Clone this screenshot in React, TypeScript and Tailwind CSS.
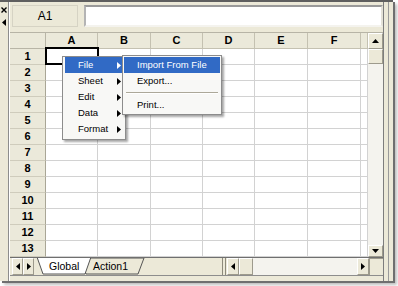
import React from "react";

const COLS = [
  { l: "A", w: 52 },
  { l: "B", w: 53 },
  { l: "C", w: 52 },
  { l: "D", w: 52 },
  { l: "E", w: 53 },
  { l: "F", w: 53 },
  { l: "", w: 7 },
];
const ROWS = Array.from({ length: 13 }, (_, i) => i + 1);

type Dir = "up" | "down" | "left" | "right";

function Tri({ dir }: { dir: Dir }) {
  const vert = dir === "up" || dir === "down";
  const pts = {
    up: "0,4 3.5,0 7,4",
    down: "0,0 7,0 3.5,4",
    left: "4,0 4,7 0,3.5",
    right: "0,0 0,7 4,3.5",
  }[dir];
  return (
    <svg width={vert ? 7 : 4} height={vert ? 4 : 7} viewBox={vert ? "0 0 7 4" : "0 0 4 7"}>
      <polygon points={pts} fill="#000" />
    </svg>
  );
}

function Btn({ dir, className }: { dir: Dir; className: string }) {
  return (
    <div
      className={`flex items-center justify-center bg-[#ece9d8] border border-t-white border-l-white border-r-[#9d9a8c] border-b-[#9d9a8c] ${className}`}
    >
      <Tri dir={dir} />
    </div>
  );
}

function FileMenu() {
  const items = ["File", "Sheet", "Edit", "Data", "Format"];
  return (
    <div className="absolute left-[62px] top-[54px] w-[64px] h-[84px] bg-[#f8f8f6] border border-[#8c8c8c] shadow-[2px_2px_2px_rgba(0,0,0,0.35)] pl-[2px] pr-[3px] flex flex-col">
      {items.map((t, i) => (
        <div
          key={t}
          className={`h-[16px] flex items-center justify-between pl-[13px] pr-[1px] ${
            i === 0 ? "bg-[#316ac5] text-white" : "text-black"
          }`}
        >
          <span>{t}</span>
          {i === 0 ? (
            <svg width={4} height={7} viewBox="0 0 4 7">
              <polygon points="0,0 0,7 4,3.5" fill="#fff" />
            </svg>
          ) : (
            <Tri dir="right" />
          )}
        </div>
      ))}
    </div>
  );
}

function SubMenu() {
  return (
    <div className="absolute left-[122px] top-[53px] w-[100px] h-[60px] bg-[#f8f8f6] border border-[#8c8c8c] shadow-[2px_2px_2px_rgba(0,0,0,0.35)] p-[1px] flex flex-col">
      <div className="h-[16px] flex items-center pl-[13px] bg-[#316ac5] text-white">Import From File</div>
      <div className="h-[16px] flex items-center pl-[13px]">Export...</div>
      <div className="h-[8px] flex flex-col justify-center px-[2px]">
        <div className="h-[1px] bg-[#aca899]" />
        <div className="h-[1px] bg-white" />
      </div>
      <div className="h-[16px] flex items-center pl-[13px]">Print...</div>
    </div>
  );
}

function SheetTabs() {
  return (
    <div className="relative w-[112px] h-full">
      <svg className="absolute inset-0" width={112} height={17} viewBox="0 0 112 17">
        <polygon points="46,0 110,0 104,16 52,16" fill="#ece9d8" stroke="#555" strokeWidth={1} />
        <polygon points="3,-1 57,-1 51,16 9,16" fill="#fff" stroke="#555" strokeWidth={1} />
      </svg>
      <span className="absolute left-[15px] top-[2px] text-[10.5px] leading-[13px]">Global</span>
      <span className="absolute left-[59px] top-[2px] text-[10.5px] leading-[13px]">Action1</span>
    </div>
  );
}

export default function App() {
  return (
    <div className="w-[398px] h-[286px] bg-white overflow-hidden" style={{ fontFamily: '"Liberation Sans", Arial, sans-serif' }}>
      <div className="relative w-[393px] h-[281px] bg-[#ece9d8] border-t-2 border-[#5f5f5f] shadow-[2px_2px_0_#6f6f6f,4px_4px_3px_#bdbdbd] flex">
        {/* docking strip */}
        <div className="w-[9px] border-r border-[#8d8d8d] flex flex-col items-center pt-[5px] gap-[6px]">
          <svg width={6} height={6} viewBox="0 0 6 6">
            <path d="M0.5 0.5 L5.5 5.5 M5.5 0.5 L0.5 5.5" stroke="#000" strokeWidth={1.4} />
          </svg>
          <Tri dir="left" />
        </div>
        <div className="w-[1px] bg-white" />

        {/* main */}
        <div className="w-[373px] flex flex-col">
          <div className="h-[30px] flex items-start pt-[3px] pl-[2px] gap-[6px]">
            <div className="w-[66px] h-[22px] flex items-center justify-center text-[12px] border border-[#d6d3c4]">A1</div>
            <div className="flex-1 h-[22px] bg-white border-2 border-t-[#9a9a9a] border-l-[#b4b4b4] border-r-[#e4e2d8] border-b-[#f4f3ee]" />
          </div>

          <div className="h-[225px] flex border-t border-[#b7b4a6]">
            <div className="w-[358px] flex flex-col bg-white overflow-hidden">
              <div className="h-[16px] flex shrink-0">
                <div className="w-[36px] shrink-0 bg-[#ebe9da] border-r border-b border-[#b8b5a6]" />
                {COLS.map((c, i) => (
                  <div
                    key={i}
                    style={{ width: c.w }}
                    className="shrink-0 bg-[#ebe9da] border-r border-b border-[#c4c1b1] flex items-center justify-center text-[11px] font-bold"
                  >
                    {c.l}
                  </div>
                ))}
              </div>
              {ROWS.map((r) => (
                <div key={r} className="h-[16px] flex shrink-0">
                  <div className="w-[36px] shrink-0 bg-[#ebe9da] border-r border-r-[#a9a696] border-b border-b-[#cfccbc] flex items-center justify-center text-[11px] font-bold">
                    {r}
                  </div>
                  {COLS.map((c, i) => (
                    <div key={i} style={{ width: c.w }} className="shrink-0 border-r border-b border-[#d2d2d2]" />
                  ))}
                </div>
              ))}
            </div>
            <div className="w-[15px] flex flex-col bg-[#f4f3ee]">
              <Btn dir="up" className="h-[16px]" />
              <div className="h-[15px] bg-[#ece9d8] border border-t-white border-l-white border-r-[#9d9a8c] border-b-[#9d9a8c]" />
              <div className="flex-1" />
              <Btn dir="down" className="h-[12px]" />
            </div>
          </div>

          <div className="h-[18px] flex border-t border-[#6f6f6f] pl-[2px]">
            <Btn dir="left" className="w-[11px]" />
            <Btn dir="right" className="w-[11px]" />
            <SheetTabs />
            <div className="flex-1" />
            <div className="w-[4px] border-x border-[#8d8a7c] bg-[#ece9d8]" />
            <Btn dir="left" className="w-[12px] ml-[1px]" />
            <div className="w-[14px] bg-[#ece9d8] border border-t-white border-l-white border-r-[#9d9a8c] border-b-[#9d9a8c]" />
            <div className="w-[104px] bg-[#f4f3ee]" />
            <Btn dir="right" className="w-[12px]" />
            <div className="w-[14px] bg-[#ece9d8] border-l border-t border-[#9d9a8c]" />
          </div>
          <div className="flex-1 border-t border-[#8d8d8d]" />
        </div>

        {/* right frame */}
        <div className="w-[10px] border-l border-[#7d7d7d] flex">
          <div className="w-[4px]" />
          <div className="w-[1px] bg-[#9a9a9a]" />
        </div>

        {/* selected cell A1 */}
        <div className="absolute left-[45px] top-[45px] w-[54px] h-[18px] border-2 border-black" />

        <div className="text-[9.5px]">
          <FileMenu />
          <SubMenu />
        </div>
      </div>
    </div>
  );
}
